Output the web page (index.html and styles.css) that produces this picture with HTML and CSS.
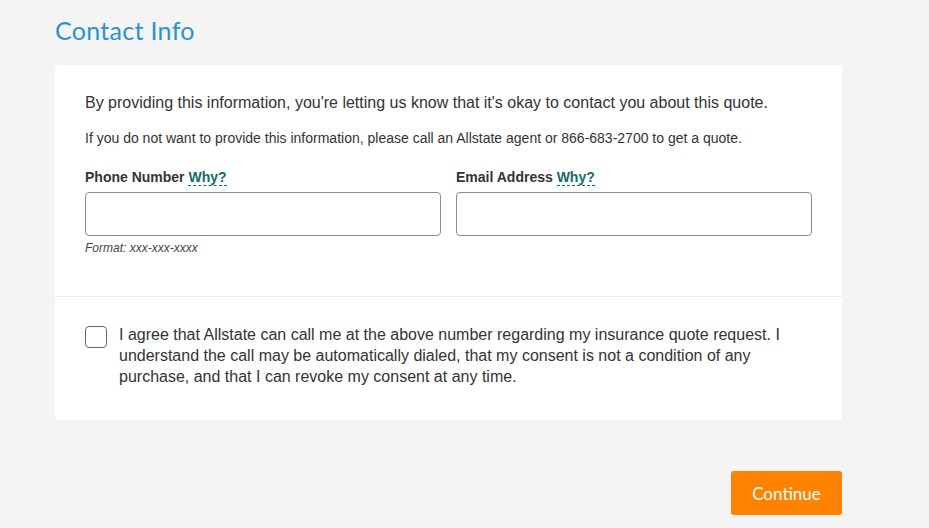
FILE: index.html
```html
<!DOCTYPE html>
<html lang="en">
<head>
<meta charset="utf-8">
<title>Contact Info</title>
<link rel="stylesheet" href="styles.css">
</head>
<body>
<main class="page">
  <h1 class="title">Contact Info</h1>
  <section class="card">
    <div class="card-top">
      <p class="lead">By providing this information, you're letting us know that it's okay to contact you about this quote.</p>
      <p class="note">If you do not want to provide this information, please call an Allstate agent or 866-683-2700 to get a quote.</p>
      <div class="fields">
        <div class="field">
          <label class="label">Phone Number <span class="why">Why?</span></label>
          <input class="input" type="text">
          <span class="hint">Format: xxx-xxx-xxxx</span>
        </div>
        <div class="field">
          <label class="label">Email Address <span class="why">Why?</span></label>
          <input class="input" type="text">
        </div>
      </div>
    </div>
    <div class="card-bottom">
      <span class="checkbox"></span>
      <p class="consent">I agree that Allstate can call me at the above number regarding my insurance quote request. I understand the call may be automatically dialed, that my consent is not a condition of any purchase, and that I can revoke my consent at any time.</p>
    </div>
  </section>
  <div class="actions">
    <button class="btn" type="button">Continue</button>
  </div>
</main>
</body>
</html>
```

FILE: styles.css
```css
* { box-sizing: border-box; }
html, body { margin: 0; padding: 0; }
body {
  background: #f4f4f4;
  font-family: "Liberation Sans", Arial, sans-serif;
  color: #333;
}
.page {
  width: 787px;
  margin-left: 55px;
  padding-top: 15px;
}
.title {
  margin: 0;
  font-family: Lato, "Open Sans", sans-serif;
  font-weight: 400;
  font-size: 25px;
  letter-spacing: 0.3px;
  line-height: 30px;
  color: #2a92d3;
}
.card {
  margin-top: 20px;
  background: #fff;
  border-radius: 3px;
}
.card-top {
  padding: 28px 30px 41px;
  border-bottom: 1px solid #ececec;
}
.lead {
  margin: 0;
  font-size: 16px;
  line-height: 20px;
}
.note {
  margin: 16px 0 0;
  font-size: 14px;
  line-height: 18px;
}
.fields {
  display: grid;
  grid-template-columns: 1fr 1fr;
  column-gap: 15px;
  margin-top: 22px;
}
.field { display: flex; flex-direction: column; }
.label {
  font-size: 14px;
  font-weight: 700;
  line-height: 16px;
  color: #333;
  margin-bottom: 7px;
}
.why {
  color: #116b67;
  border-bottom: 1px dashed #116b67;
}
.input {
  height: 44px;
  border: 1px solid #8c8c8c;
  border-radius: 4px;
  background: #fff;
  font: inherit;
}
.hint {
  margin-top: 5px;
  font-size: 12px;
  font-style: italic;
  line-height: 14px;
  color: #444;
}
.card-bottom {
  display: flex;
  align-items: flex-start;
  gap: 12px;
  padding: 27px 30px 33px;
}
.checkbox {
  flex: none;
  width: 22px;
  height: 22px;
  border: 1px solid #666;
  border-radius: 4px;
  margin-top: 2px;
}
.consent {
  margin: 0;
  font-size: 16px;
  line-height: 21px;
  color: #333;
}
.actions {
  display: flex;
  justify-content: flex-end;
  margin-top: 51px;
}
.btn {
  width: 111px;
  height: 44px;
  border: 0;
  border-radius: 3px;
  background: #ff8200;
  color: #fff;
  font-family: Lato, "Open Sans", sans-serif;
  font-size: 17px;
}
```
